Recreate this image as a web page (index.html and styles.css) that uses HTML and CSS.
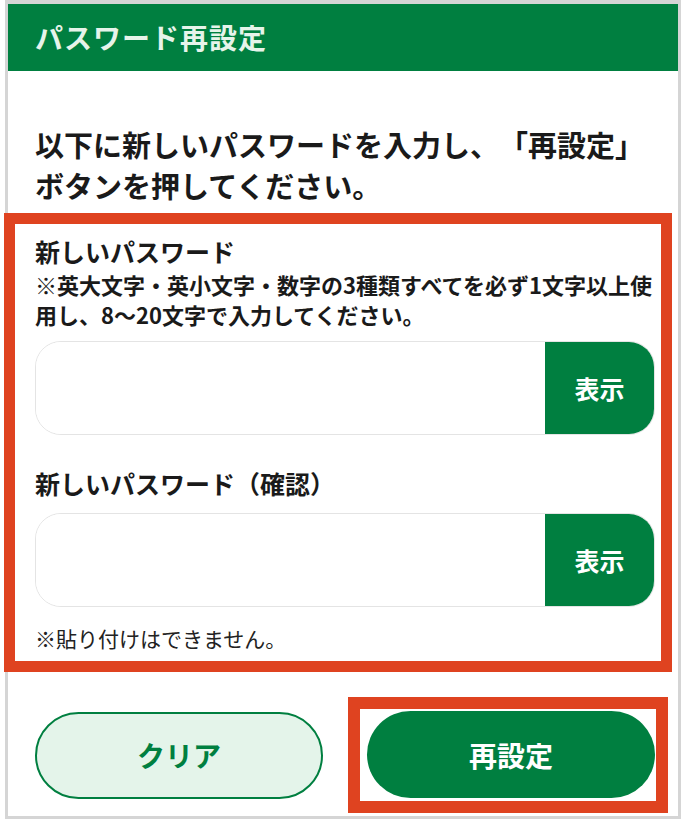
FILE: index.html
```html
<!DOCTYPE html>
<html lang="ja">
  <head>
    <meta charset="UTF-8" />
    <meta name="viewport" content="width=device-width, initial-scale=1" />
    <title>パスワード再設定</title>
    <link rel="stylesheet" href="styles.css">
  </head>
  <body>
    <div class="card">
      <h1 class="card-title">パスワード再設定</h1>

      <div class="card-body">
        <p class="lead">
          以下に新しいパスワードを入力し、「再設定」<br>ボタンを押してください。
        </p>

        <section class="form-box">
          <label class="field-label" for="pw">新しいパスワード</label>
          <p class="field-note">
            ※英大文字・英小文字・数字の3種類すべてを必ず1文字以上使用し、8〜20文字で入力してください。
          </p>
          <div class="pw-field">
            <input id="pw" type="password" class="pw-input">
            <button class="show-button" type="button">表示</button>
          </div>

          <label class="field-label field-label-2" for="pw2">新しいパスワード（確認）</label>
          <div class="pw-field">
            <input id="pw2" type="password" class="pw-input">
            <button class="show-button" type="button">表示</button>
          </div>
          <p class="paste-note">※貼り付けはできません。</p>
        </section>

        <div class="actions">
          <button class="btn btn-clear" type="button">クリア</button>
          <div class="btn-highlight">
            <button class="btn btn-submit" type="submit">再設定</button>
          </div>
        </div>
      </div>
    </div>
  </body>
</html>
```

FILE: styles.css
```css
:root {
  --green: #007f40;
  --green-light: #e4f4ea;
  --red: #df4320;
  --frame: #d5d5d5;
  --text: #1a1a1a;
  --input-border: #e4e4e4;
}
* {
  box-sizing: border-box;
  margin: 0;
  padding: 0;
  font-family: 'Noto Sans CJK JP', 'Noto Sans', sans-serif;
  text-spacing-trim: space-all;
}
body {
  background: #fff;
  color: var(--text);
}
.card {
  margin: 0 2px 4px 5px;
  border: 3px solid var(--frame);
  border-top-width: 4px;
}
.card-title {
  background: var(--green);
  color: #e6f4ea;
  font-size: 28px;
  font-weight: bold;
  line-height: 67px;
  height: 67px;
  padding-left: 27px;
  letter-spacing: 1px;
}
.card-body {
  padding: 53px 23px 3px 27px;
}
.lead {
  font-size: 29px;
  font-weight: bold;
  line-height: 41px;
}
.form-box {
  margin: 7px -17px 0 -31px;
  border: 11px solid var(--red);
  padding: 10px 6px 0 20px;
  height: 459px;
}
.field-label {
  display: block;
  font-size: 25px;
  font-weight: bold;
  line-height: 35px;
}
.field-label-2 {
  margin-top: 31px;
}
.field-note {
  font-size: 22px;
  font-weight: bold;
  line-height: 30px;
}
.pw-field {
  display: flex;
  height: 94px;
  margin-top: 12px;
  border: 1px solid var(--input-border);
  border-radius: 26px;
  overflow: hidden;
}
.pw-input {
  flex: 1;
  border: none;
  outline: none;
  background: #fff;
  font-size: 24px;
  padding: 0 20px;
}
.show-button {
  width: 109px;
  border: none;
  background: var(--green);
  color: #fff;
  font-size: 25px;
  font-weight: bold;
  cursor: pointer;
}
.paste-note {
  margin-top: 16px;
  font-size: 21px;
  line-height: 30px;
  color: #222;
}
.actions {
  display: flex;
  align-items: center;
  margin-top: 25px;
  margin-right: -13px;
}
.btn {
  width: 288px;
  height: 87px;
  border-radius: 44px;
  font-size: 28px;
  font-weight: bold;
  cursor: pointer;
}
.btn-clear {
  background: var(--green-light);
  border: 2px solid var(--green);
  color: var(--green);
}
.btn-highlight {
  margin-left: 25px;
  border: 12px solid var(--red);
  padding: 2px 1px 3px 7px;
}
.btn-submit {
  display: block;
  background: var(--green);
  border: none;
  color: #fff;
}
```
